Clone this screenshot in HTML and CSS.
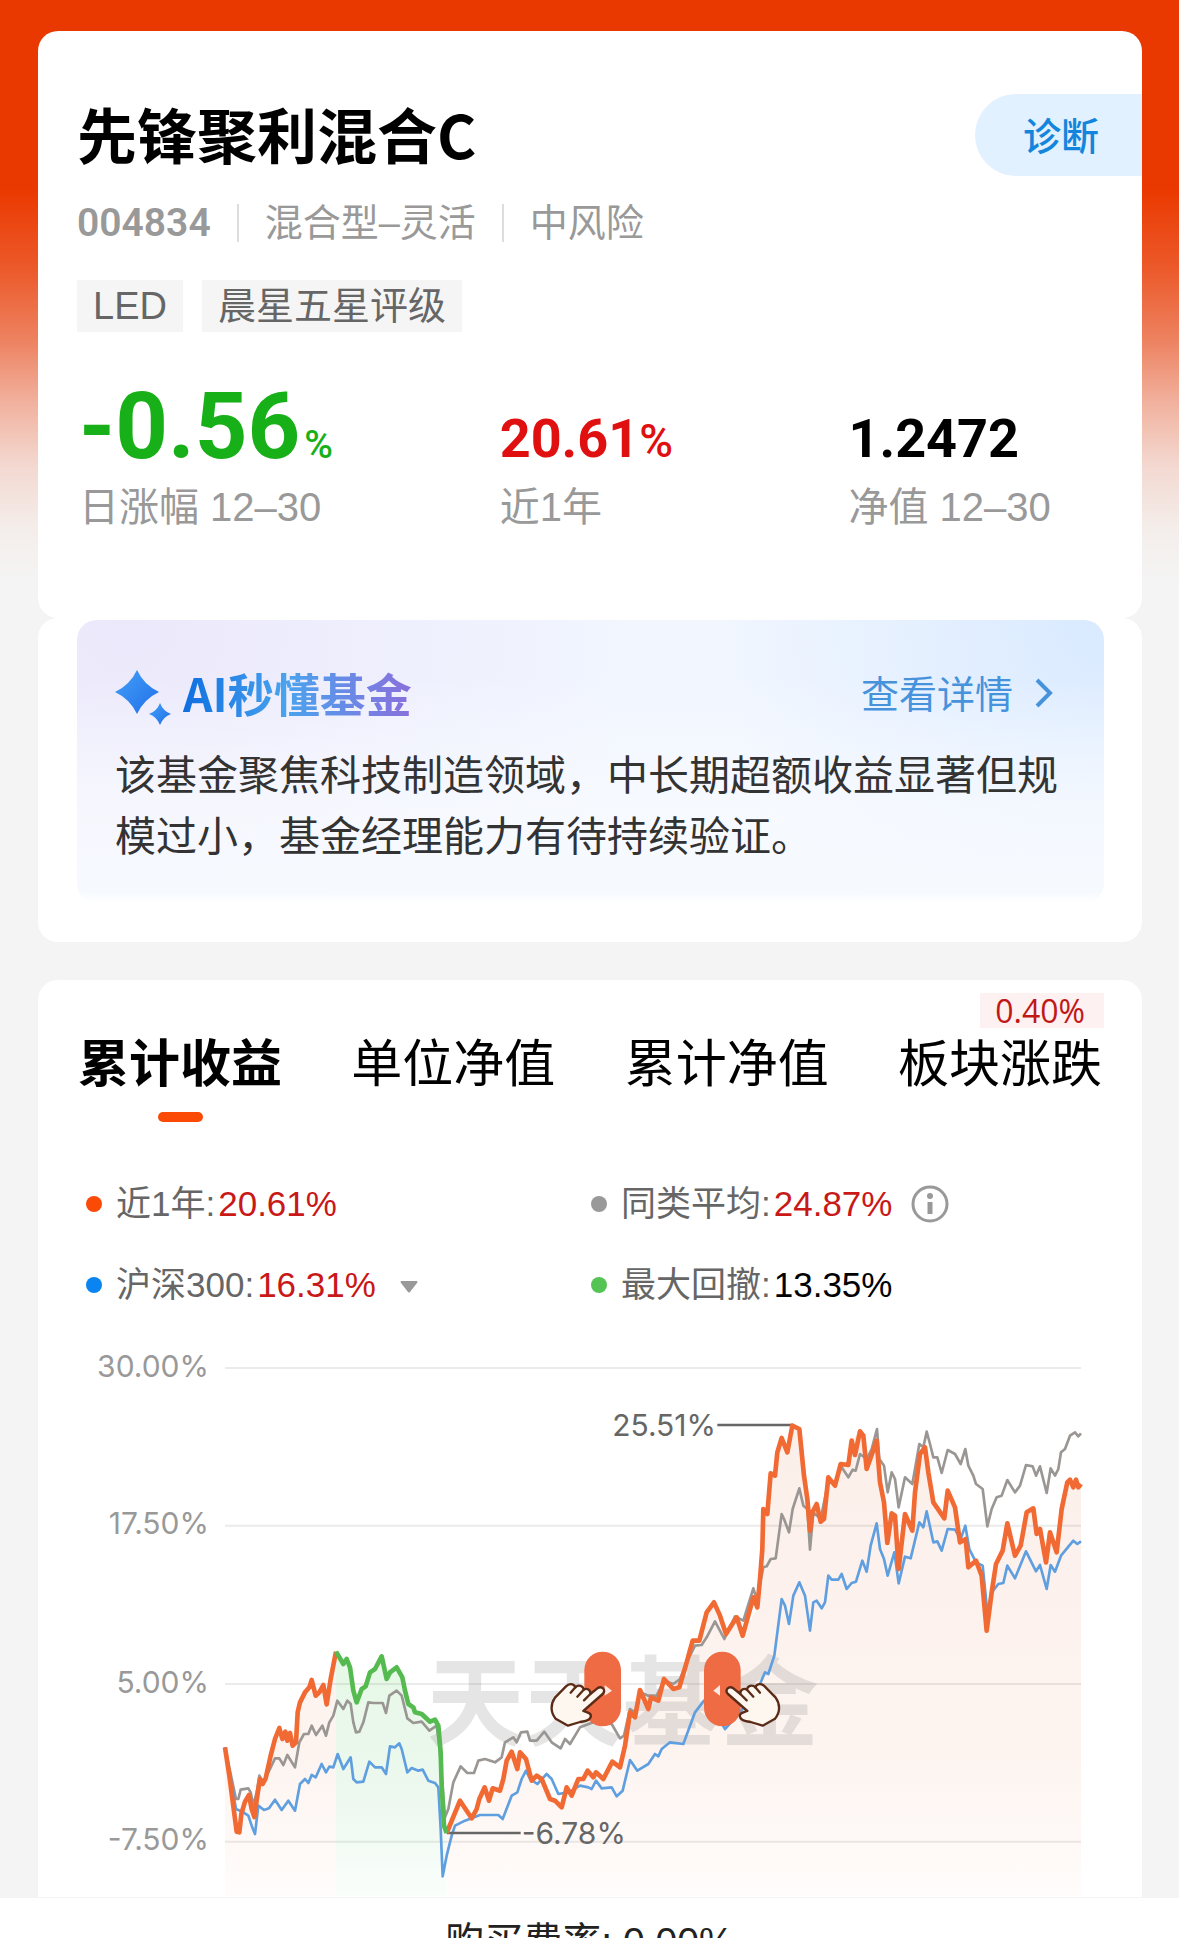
FILE: index.html
```html
<!DOCTYPE html>
<html lang="zh-CN">
<head>
<meta charset="utf-8">
<meta name="viewport" content="width=device-width, initial-scale=1">
<title>先锋聚利混合C</title>
<link rel="stylesheet" href="styles.css">
</head>
<body>
<div class="app">
  <main class="content">
    <section class="card summary">
      <div class="summary-head">
        <h1 class="fund-name">先锋聚利混合C</h1>
        <button class="diagnose" type="button">诊断</button>
      </div>
      <div class="meta">
        <span class="code">004834</span>
        <span class="meta-item">混合型–灵活</span>
        <span class="meta-item">中风险</span>
      </div>
      <div class="tags">
        <span class="tag">LED</span>
        <span class="tag">晨星五星评级</span>
      </div>
      <div class="stats">
        <div class="stat">
          <div class="stat-value stat-main">-0.56<span class="unit">%</span></div>
          <div class="stat-label">日涨幅 12–30</div>
        </div>
        <div class="stat">
          <div class="stat-value up">20.61<span class="percent">%</span></div>
          <div class="stat-label">近1年</div>
        </div>
        <div class="stat">
          <div class="stat-value">1.2472</div>
          <div class="stat-label">净值 12–30</div>
        </div>
      </div>
    </section>

    <section class="card insight">
      <div class="ai">
        <div class="ai-head">
          <svg class="ai-icon" viewBox="0 0 56 56" aria-hidden="true">
            <defs>
              <linearGradient id="spark" x1="0" y1="0" x2="1" y2="1">
                <stop offset="0" stop-color="#45a0f8"/>
                <stop offset="1" stop-color="#1f6fe8"/>
              </linearGradient>
            </defs>
            <path fill="url(#spark)" d="M22 0Q29 15 44 22Q29 29 22 44Q15 29 0 22Q15 15 22 0Z"/>
            <path fill="url(#spark)" d="M45 33Q48 41 56 44Q48 47 45 55Q42 47 34 44Q42 41 45 33Z"/>
          </svg>
          <h2 class="ai-title">AI秒懂基金</h2>
          <a class="ai-more" href="#detail">查看详情
            <svg class="chevron" viewBox="0 0 18 30" aria-hidden="true"><path d="M2 2L15 15L2 28" fill="none" stroke="currentColor" stroke-width="4"/></svg>
          </a>
        </div>
        <p class="ai-text">该基金聚焦科技制造领域，中长期超额收益显著但规模过小，基金经理能力有待持续验证。</p>
      </div>
    </section>

    <section class="card performance">
      <nav class="tabs">
        <button class="tab active" type="button">累计收益</button>
        <button class="tab" type="button">单位净值</button>
        <button class="tab" type="button">累计净值</button>
        <button class="tab" type="button">板块涨跌<span class="badge">0.40%</span></button>
      </nav>
      <div class="legend">
        <div class="legend-item"><i class="dot orange"></i><span>近1年:</span><b class="up">20.61%</b></div>
        <div class="legend-item"><i class="dot gray"></i><span>同类平均:</span><b class="up">24.87%</b>
          <svg class="info" viewBox="0 0 38 38" role="img" aria-label="说明"><circle cx="19" cy="19" r="17" fill="none" stroke="#999" stroke-width="3"/><circle cx="19" cy="11" r="3" fill="#999"/><path d="M19 17V29" stroke="#999" stroke-width="5"/></svg>
        </div>
        <div class="legend-item"><i class="dot blue"></i><span>沪深300:</span><b class="up">16.31%</b>
          <svg class="caret" viewBox="0 0 18 12" aria-hidden="true"><path d="M1 0H17Q18 1 17 2L10 11Q9 12 8 11L1 2Q0 1 1 0Z" fill="#999"/></svg>
        </div>
        <div class="legend-item"><i class="dot green"></i><span>最大回撤:</span><b>13.35%</b></div>
      </div>

      <svg class="chart" viewBox="-486 -720 3312 1674" role="img" aria-label="累计收益走势">
        <defs>
          <linearGradient id="warm" gradientUnits="userSpaceOnUse" x1="0" y1="-460" x2="0" y2="950">
            <stop offset="0" stop-color="#fcefea"/>
            <stop offset=".7" stop-color="#fdf4f0"/>
            <stop offset="1" stop-color="#fffcfb"/>
          </linearGradient>
          <linearGradient id="fresh" gradientUnits="userSpaceOnUse" x1="0" y1="218" x2="0" y2="950">
            <stop offset="0" stop-color="#e6f8e6"/>
            <stop offset=".6" stop-color="#edf8ef"/>
            <stop offset="1" stop-color="#fafefb"/>
          </linearGradient>
          <g id="hand">
            <path fill="#fdf7ef" stroke="#5b2b17" stroke-width="7" stroke-linejoin="round" d="M472 328C486 319 499 333 488 345L430 396C441 400 456 402 452 414C446 429 432 426 420 429L384 440L347 419C331 400 331 376 345 356L378 322C388 312 402 314 406 325C416 315 430 321 431 332C441 326 452 332 451 345Z"/>
            <path fill="none" stroke="#5b2b17" stroke-width="7" stroke-linecap="round" d="M406 325L392 341M431 332L412 353M451 345L432 364"/>
          </g>
        </defs>

        <path fill="url(#warm)" d="M75 505L88 590L113 762L124 705L147 648L163 714L180 600L197 598L212 530L238 447L278 500L288 490L293 400L300 370L328 325L335 303L347 350L370 318L380 376L408 218V950H75Z"/>
        <path fill="url(#fresh)" d="M408 218L430 255L440 240L450 265L460 335L470 370L485 330L497 322L510 280L525 270L545 232L560 300L570 280L590 265L607 295L625 375L645 400L690 428L705 422L715 440L725 620L740 762V950H408Z"/>
        <path fill="url(#warm)" d="M740 762L780 665L815 718L838 660L854 625L878 628L900 635L920 545L935 518L978 540L995 605L1025 600L1050 660L1085 685L1100 625L1163 575L1210 600L1237 548L1260 565L1290 400L1305 415L1320 333L1345 390L1375 365L1392 300L1438 325L1478 185L1498 185L1520 100L1542 70L1578 165L1610 115L1628 170L1672 85L1680 0L1690 -210L1702 -195L1712 -317L1725 -310L1745 -423L1762 -380L1777 -460L1798 -450L1812 -310L1830 -145L1850 -225L1872 -180L1885 -305L1905 -280L1922 -345L1945 -342L1955 -415L1980 -443L2000 -330L2030 -415L2040 -290L2062 -108L2075 -197L2096 -30L2115 -195L2137 -145L2160 -375L2175 -395L2200 -230L2233 -182L2243 -265L2265 -215L2280 -110L2297 -120L2305 -35L2328 -55L2345 -10L2360 155L2375 40L2408 -85L2422 -167L2445 -70L2480 -200L2500 -212L2510 -135L2538 -50L2550 -140L2570 -80L2602 -290L2643 -285V950H740Z"/>

        <path class="grid" d="M75 -633H2643M75 -160H2643M75 315H2643M75 788H2643"/>
        <text class="watermark" x="680" y="476">天天基金</text>

        <g class="axis">
          <text x="27" y="-607">30.00%</text>
          <text x="27" y="-134">17.50%</text>
          <text x="27" y="341">5.00%</text>
          <text x="27" y="813">-7.50%</text>
        </g>

        <polyline class="line line-gray" points="75,505 108,660 115,660 122,632 145,628 152,640 160,680 170,640 178,590 190,610 210,570 225,538 238,538 250,558 262,528 285,565 298,490 312,465 325,465 335,440 348,468 367,440 378,470 388,430 400,410 412,365 430,390 442,365 452,375 460,430 468,460 478,458 490,430 505,370 520,372 548,372 558,402 568,350 590,335 605,350 622,418 640,432 665,428 688,455 710,440 718,500 735,715 745,690 760,610 782,562 802,582 822,582 835,545 855,540 885,550 905,535 915,490 940,475 950,490 963,460 982,458 990,485 1010,485 1033,458 1055,490 1082,508 1095,480 1110,495 1140,445 1180,430 1235,435 1260,478 1272,470 1290,390 1305,400 1320,340 1345,350 1370,350 1392,305 1420,315 1440,300 1460,250 1485,200 1505,198 1520,175 1545,127 1573,180 1605,112 1630,125 1660,28 1670,60 1675,40 1690,-35 1700,-38 1712,-60 1727,-62 1745,-195 1752,-180 1767,-140 1778,-210 1798,-272 1810,-220 1822,-210 1830,-88 1840,-200 1862,-180 1885,-295 1905,-290 1925,-335 1945,-305 1958,-328 1967,-325 1980,-375 2000,-360 2015,-390 2031,-450 2038,-360 2052,-340 2063,-260 2075,-320 2085,-300 2096,-215 2115,-305 2137,-285 2158,-405 2170,-395 2180,-442 2190,-405 2200,-365 2212,-365 2225,-318 2243,-387 2265,-375 2282,-345 2296,-390 2305,-340 2320,-310 2328,-285 2348,-270 2362,-158 2375,-210 2390,-245 2405,-250 2422,-297 2445,-260 2460,-280 2478,-342 2498,-338 2508,-310 2520,-338 2540,-258 2552,-332 2565,-310 2575,-330 2583,-380 2595,-390 2610,-430 2625,-440 2635,-428 2643,-437"/>
        <polyline class="line line-blue" points="75,505 108,690 130,700 145,710 155,740 165,765 175,680 192,693 207,688 225,662 245,693 265,665 285,695 300,615 315,600 325,612 335,588 347,595 365,555 378,580 388,563 400,565 413,525 430,570 452,535 460,600 470,610 490,608 508,548 525,565 545,565 558,585 570,502 585,505 598,493 605,510 622,580 635,567 655,575 668,572 685,605 705,612 715,625 722,750 728,892 740,830 755,770 765,740 795,725 840,708 895,708 908,720 935,650 952,640 965,600 978,575 990,600 1012,615 1040,585 1055,600 1075,645 1105,640 1140,620 1165,625 1175,630 1188,605 1205,628 1235,625 1250,652 1268,635 1290,543 1312,575 1345,555 1365,525 1375,532 1385,510 1410,490 1450,495 1485,400 1512,365 1535,380 1575,450 1620,400 1680,315 1695,280 1705,285 1723,230 1745,60 1755,80 1767,135 1780,50 1798,10 1815,50 1830,155 1840,70 1850,65 1865,88 1875,70 1885,-10 1895,2 1915,2 1925,-15 1940,30 1955,12 1968,8 1987,-55 2000,-22 2012,-100 2030,-167 2040,-90 2052,-60 2063,-10 2083,-80 2096,13 2115,-67 2132,-62 2158,-170 2170,-155 2180,-203 2200,-110 2212,-113 2225,-85 2243,-150 2265,-148 2282,-120 2296,-160 2308,-90 2328,-50 2348,-40 2362,100 2375,40 2395,15 2410,12 2422,-40 2445,-2 2478,-83 2508,-23 2520,-42 2540,30 2552,-42 2565,-22 2583,-70 2620,-115 2632,-105 2643,-113"/>

        <path class="callout" d="M1552 -462H1777M740 762H962"/>
        <text class="extreme extreme-max" x="1548" y="-428">25.51%</text>
        <text class="extreme" x="965" y="795">-6.78%</text>

        <polyline class="line line-orange" points="75,505 88,590 110,758 118,760 124,705 135,668 147,648 155,690 163,714 172,650 180,600 188,615 197,598 212,530 225,480 238,447 247,480 256,458 262,485 270,462 278,500 288,490 293,400 300,370 315,340 328,325 335,303 347,350 358,340 370,318 380,376 392,300 408,218"/>
        <polyline class="line line-orange" points="740,762 780,665 815,718 830,690 838,660 854,625 867,665 878,628 900,635 910,600 920,545 935,518 952,570 960,520 978,540 995,605 1010,590 1025,600 1050,660 1065,665 1085,685 1100,625 1115,650 1135,600 1150,600 1163,575 1180,595 1188,580 1210,600 1237,548 1260,565 1275,500 1290,400 1305,415 1320,333 1345,390 1353,355 1375,365 1392,300 1420,330 1438,325 1460,250 1478,185 1498,185 1520,100 1542,70 1560,110 1578,165 1610,115 1628,170 1660,55 1672,85 1680,0 1687,-90 1690,-210 1702,-195 1712,-317 1725,-310 1732,-380 1745,-423 1762,-380 1777,-460 1798,-450 1812,-310 1822,-240 1830,-145 1837,-200 1850,-225 1862,-172 1872,-180 1885,-305 1905,-280 1922,-345 1945,-342 1955,-415 1965,-372 1980,-443 1990,-430 2000,-330 2030,-415 2040,-290 2052,-230 2062,-108 2075,-197 2085,-190 2096,-30 2115,-195 2137,-145 2145,-260 2160,-375 2175,-395 2185,-320 2200,-230 2233,-182 2243,-265 2265,-215 2280,-110 2297,-120 2305,-35 2328,-55 2345,-10 2360,155 2375,40 2388,-45 2408,-85 2422,-167 2445,-70 2462,-100 2480,-200 2500,-212 2510,-135 2520,-150 2538,-50 2550,-140 2570,-80 2585,-210 2602,-290 2610,-298 2620,-275 2628,-298 2635,-275 2643,-285"/>
        <polyline class="line line-green" points="408,218 430,255 440,240 450,265 460,335 470,370 485,330 497,322 510,280 525,270 545,232 560,300 570,280 590,265 607,295 615,335 625,375 640,385 645,400 665,405 690,428 705,422 715,440 722,520 725,620 732,740 740,762"/>

        <g class="handle">
          <rect x="1153" y="218" width="110" height="224" rx="55"/>
          <path d="M1214 318L1236 335L1214 350Z"/>
          <use href="#hand" x="720"/>
        </g>
        <g class="handle">
          <rect x="1512" y="218" width="110" height="224" rx="55"/>
          <path d="M1560 318L1540 335L1560 350Z"/>
          <use href="#hand" transform="translate(2072 0) scale(-1 1)"/>
        </g>
      </svg>
    </section>
  </main>

  <footer class="trade-bar">
    <p class="fee">购买费率: 0.00%</p>
  </footer>
</div>
</body>
</html>
```
FILE: styles.css
```css
* {
  box-sizing: border-box;
}

body,
h1,
h2,
p {
  margin: 0;
}

body {
  font-family: "Liberation Sans", "Noto Sans CJK SC", sans-serif;
  color: #000;
  background: #f4f4f4;
}

button {
  border: 0;
  padding: 0;
  background: none;
  font-family: inherit;
  color: inherit;
}

.app {
  display: flex;
  flex-direction: column;
  height: 100vh;
  overflow: hidden;
  background: linear-gradient(#ea3900 190px, #ec5a2b 270px, #ed8260 340px, #f1b3a0 405px, #f3d8d0 465px, #f4eeeb 530px, #f4f4f4 580px);
}

.content {
  flex: 1;
  min-height: 0;
  overflow: hidden;
  padding: 31px 37px 0 38px;
}

.card {
  background: #fff;
  border-radius: 20px;
}

/* Fund summary */

.summary {
  padding: 62px 39px 83px;
}

.summary-head {
  display: flex;
  align-items: center;
  justify-content: space-between;
  margin-right: -39px;
}

.fund-name {
  padding-bottom: 4px;
  font-size: 60px;
  line-height: 80px;
  font-weight: 700;
  font-family: "Noto Sans CJK SC", sans-serif;
}

.diagnose {
  height: 82px;
  padding: 0 43px 4px 48px;
  border-radius: 41px 0 0 41px;
  background: #e2f1ff;
  color: #1485dc;
  font-size: 38px;
  font-weight: 500;
}

.meta {
  display: flex;
  align-items: center;
  margin-top: 21px;
  font-size: 38px;
  line-height: 50px;
  color: #999;
}

.code {
  font-family: Roboto, sans-serif;
  font-size: 39px;
  font-weight: 600;
}

.meta-item {
  display: flex;
  align-items: center;
}

.meta-item::before {
  content: "";
  width: 2px;
  height: 38px;
  margin: 0 26px;
  background: #ddd;
}

.tags {
  display: flex;
  gap: 19px;
  margin-top: 32px;
}

.tag {
  padding: 0 16px;
  background: #f5f5f5;
  color: #666;
  font-size: 38px;
  line-height: 52px;
}

.stats {
  display: grid;
  grid-template-columns: 41% 34% 25%;
  align-items: end;
  margin-top: 43px;
}

.stat {
  padding-left: 2px;
  white-space: nowrap;
}

.stat-value {
  font-family: Roboto, sans-serif;
  font-size: 54px;
  line-height: 80px;
  font-weight: 700;
}

.stat-main {
  font-size: 92px;
  line-height: 104px;
  color: #18b018;
}

.unit {
  margin-left: 4px;
  font-size: 39px;
  font-weight: 500;
  line-height: 1;
}

.percent {
  font-size: 46px;
  font-weight: 500;
  line-height: 1;
}

.up {
  color: #e01010;
}

.stat-label {
  font-size: 40px;
  line-height: 56px;
  color: #999;
}

/* AI insight */

.insight {
  padding: 2px 38px 39px 39px;
}

.ai {
  padding: 44px 37px 35px 38px;
  border-radius: 20px;
  background:
    linear-gradient(rgba(255, 255, 255, 0) 20%, rgba(249, 251, 255, .7) 65%, rgba(247, 251, 255, .9) 96%, #fff),
    radial-gradient(circle at 100% 0, #d9eaff, rgba(217, 234, 255, 0) 36%),
    radial-gradient(circle at 5% 0, #ece8fb, rgba(236, 232, 251, 0) 50%),
    #f1f6ff;
}

.ai-head {
  display: flex;
  align-items: center;
  height: 60px;
}

.ai-icon {
  width: 56px;
  height: 56px;
  margin-top: 8px;
}

.ai-title {
  margin-left: 12px;
  padding-bottom: 5px;
  font-size: 46px;
  line-height: 60px;
  font-weight: 700;
  font-family: "Noto Sans CJK SC", sans-serif;
  background: linear-gradient(90deg, #0f6fe0, #4aa3ee 45%, #8a6fdc);
  background-clip: text;
  color: transparent;
}

.ai-more {
  display: flex;
  align-items: center;
  gap: 22px;
  margin-left: auto;
  padding: 0 14px 6px 0;
  font-size: 38px;
  color: #4693dc;
  text-decoration: none;
}

.chevron {
  width: 18px;
  height: 30px;
  margin-top: 4px;
}

.ai-text {
  margin-top: 22px;
  font-size: 41px;
  line-height: 61px;
  color: #333;
}

/* Performance */

.performance {
  margin-top: 38px;
  border-radius: 20px 20px 0 0;
}

.tabs {
  display: flex;
  justify-content: space-between;
  padding: 49px 40px 0;
}

.tab {
  position: relative;
  padding-bottom: 21px;
  font-size: 51px;
  line-height: 72px;
  white-space: nowrap;
}

.tab.active {
  font-weight: 700;
}

.tab.active::after {
  content: "";
  position: absolute;
  left: 50%;
  bottom: 0;
  width: 45px;
  height: 10px;
  margin-left: -22px;
  border-radius: 5px;
  background: #fa4a05;
}

.badge {
  position: absolute;
  right: -2px;
  top: -36px;
  padding: 0 19px 0 15px;
  background: #fef1f1;
  color: #c01818;
  font-family: "Open Sans", sans-serif;
  font-size: 32px;
  line-height: 35px;
}

.legend {
  display: grid;
  grid-template-columns: 1fr 1fr;
  row-gap: 31px;
  padding: 57px 46px 0 48px;
}

.legend-item {
  display: flex;
  align-items: center;
  font-size: 35px;
  line-height: 50px;
  color: #666;
  white-space: nowrap;
}

.legend-item b {
  margin-left: 3px;
  font-weight: 400;
  color: #000;
}

.legend-item .up {
  color: #c81818;
}

.dot {
  width: 16px;
  height: 16px;
  margin-right: 14px;
  border-radius: 50%;
}

.orange { background: #fa4a05; }
.gray { background: #999; }
.blue { background: #0a84f0; }
.green { background: #55c455; }

.info {
  width: 38px;
  height: 38px;
  margin-left: 19px;
}

.caret {
  width: 18px;
  height: 12px;
  margin: 3px 0 0 24px;
}

/* Chart: three drawing units to one CSS pixel at full width */

.chart {
  display: block;
  width: 100%;
  margin-top: 29px;
}

.grid {
  fill: none;
  stroke: #000;
  stroke-opacity: .08;
  stroke-width: 6;
}

.watermark {
  font: 700 294px "Noto Sans CJK SC", sans-serif;
  fill: #777;
  fill-opacity: .19;
}

.axis {
  font: 90px Inter, sans-serif;
  fill: #999;
  text-anchor: end;
}

.extreme {
  font: 90px Inter, sans-serif;
  fill: #666;
}

.extreme-max {
  text-anchor: end;
}

.callout {
  stroke: #666;
  stroke-width: 8;
}

.line {
  fill: none;
  stroke-width: 8;
  stroke-linejoin: round;
}

.line-gray { stroke: #9a9694; }
.line-blue { stroke: #5f9fe0; }

.line-orange {
  stroke: #f26a33;
  stroke-width: 14;
}

.line-green {
  stroke: #55bb50;
  stroke-width: 14;
}

.handle rect { fill: #ee6b44; }
.handle > path { fill: #fff; fill-opacity: .85; }

/* Bottom bar */

.trade-bar {
  flex: 0 0 40px;
  min-height: 0;
  background: #fff;
}

.fee {
  padding-top: 16px;
  font-size: 39px;
  line-height: 56px;
  color: #222;
  text-align: center;
}
```
